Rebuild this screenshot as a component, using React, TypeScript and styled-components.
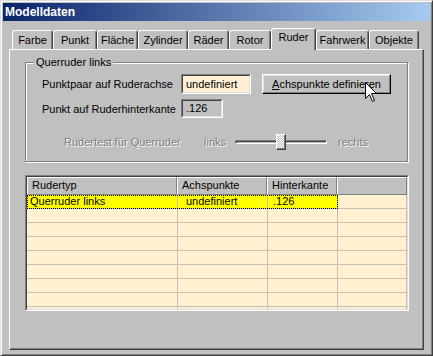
import React from "react";
import styled, { createGlobalStyle } from "styled-components";

const GlobalStyle = createGlobalStyle`
  html, body {
    margin: 0;
    padding: 0;
    background: #c0c0c0;
  }
  body {
    font-family: "Liberation Sans", Arial, sans-serif;
    font-size: 11px;
    color: #000;
  }
  * {
    box-sizing: border-box;
  }
`;

const tabs = [
  { name: "Farbe", w: 41 },
  { name: "Punkt", w: 44 },
  { name: "Fläche", w: 41 },
  { name: "Zylinder", w: 50 },
  { name: "Räder", w: 41 },
  { name: "Rotor", w: 42 },
  { name: "Ruder", w: 45 },
  { name: "Fahrwerk", w: 53 },
  { name: "Objekte", w: 50 },
];

const rows = [
  { typ: "Querruder links", achs: "undefiniert", hinten: ".126" },
  null,
  null,
  null,
  null,
  null,
  null,
  null,
  null,
];

const App = () => {
  return (
    <>
      <GlobalStyle />
      <Window>
        <TitleBar>Modelldaten</TitleBar>
        <TabStrip>
          {tabs.map((t) => (
            <Tab key={t.name} $w={t.w} $active={t.name === "Ruder"}>
              {t.name}
            </Tab>
          ))}
        </TabStrip>
        <Panel>
          <GroupBox>
            <Legend>Querruder links</Legend>
            <FieldRow>
              <Label>Punktpaar auf Ruderachse</Label>
              <TextField $w={70} $h={20} $bg="#fff0d2">
                undefiniert
              </TextField>
              <Button>
                <u>A</u>chspunkte definieren
              </Button>
            </FieldRow>
            <FieldRow $gap={5}>
              <Label>Punkt auf Ruderhinterkante</Label>
              <TextField $w={42} $h={19} $bg="#c0c0c0">
                .126
              </TextField>
            </FieldRow>
            <SliderRow>
              <DisabledText $w={140} $indent={22}>
                Rudertest für Querruder
              </DisabledText>
              <DisabledText $w={31}>links</DisabledText>
              <Slider>
                <Track />
                <Thumb />
              </Slider>
              <DisabledText $indent={11}>rechts</DisabledText>
            </SliderRow>
          </GroupBox>

          <TableOuter>
            <TableInner>
              <HeaderRow>
                <HeaderCell>Rudertyp</HeaderCell>
                <HeaderCell>Achspunkte</HeaderCell>
                <HeaderCell>Hinterkante</HeaderCell>
                <HeaderCell />
              </HeaderRow>
              {rows.map((r, i) => (
                <Row key={i}>
                  <Cell $col={1} $sel={!!r} $pad={3}>{r?.typ}</Cell>
                  <Cell $col={2} $sel={!!r} $pad={8}>{r?.achs}</Cell>
                  <Cell $col={3} $sel={!!r} $pad={5}>{r?.hinten}</Cell>
                  <Cell $col={4} />
                  {r && <Focus />}
                </Row>
              ))}
            </TableInner>
          </TableOuter>
        </Panel>
        <Cursor width="13" height="21" viewBox="0 0 13 21">
          <path
            d="M0.5 0.5 L0.5 16.5 L4.5 12.5 L7.5 19.5 L9.5 18.5 L6.5 11.5 L11.5 11.5 Z"
            fill="#fff"
            stroke="#000"
            strokeWidth="1"
          />
        </Cursor>
      </Window>
    </>
  );
};

export default App;

const Window = styled.div`
  position: relative;
  width: 433px;
  height: 356px;
  background: #c0c0c0;
  border: 1px solid;
  border-color: #dfdfdf #404040 #404040 #dfdfdf;
  box-shadow: inset 1px 1px 0 #fff, inset -1px -1px 0 #808080;
  padding: 2px;
  display: flex;
  flex-direction: column;
`;

const TitleBar = styled.div`
  height: 18px;
  padding-left: 2px;
  display: flex;
  align-items: center;
  background: linear-gradient(to right, #0a246a, #a6caf0);
  color: #fff;
  font-weight: bold;
  font-size: 12px;
`;

const TabStrip = styled.div`
  margin-top: 7px;
  height: 21px;
  padding-left: 9px;
  display: flex;
  align-items: flex-end;
`;

const Tab = styled.div<{ $w: number; $active?: boolean }>`
  position: relative;
  z-index: ${(p) => (p.$active ? 2 : 1)};
  width: ${(p) => p.$w}px;
  height: ${(p) => (p.$active ? 22 : 19)}px;
  margin-bottom: ${(p) => (p.$active ? -1 : 0)}px;
  border: 1px solid;
  border-bottom: none;
  border-color: #fff #404040 transparent #fff;
  border-radius: 3px 3px 0 0;
  box-shadow: inset -1px 0 0 #808080;
  background: #c0c0c0;
  text-align: center;
  line-height: ${(p) => (p.$active ? 16 : 18)}px;
  white-space: nowrap;
`;

const Panel = styled.div`
  flex: 1;
  margin: 0 6px 3px 6px;
  border: 1px solid;
  border-color: #fff #404040 #404040 #fff;
  box-shadow: inset -1px -1px 0 #808080;
  padding: 12px 0 0 15px;
`;

const GroupBox = styled.div`
  position: relative;
  width: 383px;
  height: 100px;
  border: 1px solid #808080;
  box-shadow: 1px 1px 0 #fff, inset 1px 1px 0 #fff;
  padding: 11px 0 0 16px;
  display: flex;
  flex-direction: column;
`;

const Legend = styled.div`
  position: absolute;
  top: -7px;
  left: 8px;
  padding: 0 2px;
  line-height: 13px;
  background: #c0c0c0;
`;

const FieldRow = styled.div<{ $gap?: number }>`
  display: flex;
  align-items: center;
  margin-top: ${(p) => p.$gap || 0}px;
`;

const Label = styled.div`
  width: 139px;
  white-space: nowrap;
`;

const TextField = styled.div<{ $w: number; $h: number; $bg: string }>`
  width: ${(p) => p.$w}px;
  height: ${(p) => p.$h}px;
  background: ${(p) => p.$bg};
  border: 1px solid;
  border-color: #808080 #fff #fff #808080;
  padding: 1px 0 0 4px;
  line-height: ${(p) => p.$h - 4}px;
  position: relative;
  &::before {
    content: "";
    position: absolute;
    inset: 0;
    border: 1px solid;
    border-color: #404040 #dfdfdf #dfdfdf #404040;
    pointer-events: none;
  }
`;

const Button = styled.div`
  width: 129px;
  height: 20px;
  margin-left: 11px;
  background: #c0c0c0;
  border: 1px solid;
  border-color: #fff #000 #000 #fff;
  box-shadow: inset -1px -1px 0 #808080, inset 1px 1px 0 #dfdfdf;
  display: flex;
  align-items: center;
  justify-content: center;
  white-space: nowrap;
`;

const SliderRow = styled.div`
  display: flex;
  align-items: center;
  height: 16px;
  margin-top: 16px;
`;

const DisabledText = styled.div<{ $w?: number; $indent?: number }>`
  width: ${(p) => (p.$w ? `${p.$w}px` : "auto")};
  margin-left: ${(p) => p.$indent || 0}px;
  color: #808080;
  text-shadow: 1px 1px 0 #fff;
  white-space: nowrap;
`;

const Slider = styled.div`
  position: relative;
  width: 92px;
  height: 16px;
  display: flex;
  align-items: center;
`;

const Track = styled.div`
  width: 100%;
  height: 4px;
  border: 1px solid;
  border-color: #808080 #fff #fff #808080;
  box-shadow: inset 1px 1px 0 #404040;
`;

const Thumb = styled.div`
  position: absolute;
  left: 41px;
  top: 0;
  width: 10px;
  height: 16px;
  border: 1px solid;
  border-color: #fff #404040 #404040 #fff;
  box-shadow: inset -1px -1px 0 #808080;
  background: repeating-conic-gradient(#c0c0c0 0 25%, #ffffff 0 50%) 0 0 / 2px 2px;
`;

const TableOuter = styled.div`
  margin-top: 13px;
  width: 384px;
  height: 136px;
  border: 1px solid;
  border-color: #808080 #fff #fff #808080;
`;

const TableInner = styled.div`
  height: 100%;
  border: 1px solid;
  border-color: #404040 #dfdfdf #dfdfdf #404040;
  background: #fff0d2;
  overflow: hidden;
`;

const HeaderRow = styled.div`
  display: grid;
  grid-template-columns: 150px 90px 70px 1fr;
  height: 18px;
`;

const HeaderCell = styled.div`
  border: 1px solid;
  border-color: #fff #808080 #808080 #fff;
  background: #c0c0c0;
  padding-left: 4px;
  line-height: 15px;
  white-space: nowrap;
`;

const Row = styled.div`
  display: grid;
  grid-template-columns: 151px 90px 70px 1fr;
  height: 14px;
`;

const Cell = styled.div<{ $col: number; $sel?: boolean; $pad?: number }>`
  grid-row: 1;
  grid-column: ${(p) => p.$col};
  background: ${(p) => (p.$sel ? "#ffff00" : "transparent")};
  border-right: 1px solid #c8c0b4;
  border-bottom: 1px solid #c8c0b4;
  padding-left: ${(p) => p.$pad || 0}px;
  line-height: 13px;
  white-space: nowrap;
`;

const Focus = styled.div`
  grid-row: 1;
  grid-column: 1 / 4;
  border: 1px dotted #000;
  pointer-events: none;
`;

const Cursor = styled.svg`
  position: absolute;
  left: 364px;
  top: 81px;
`;
